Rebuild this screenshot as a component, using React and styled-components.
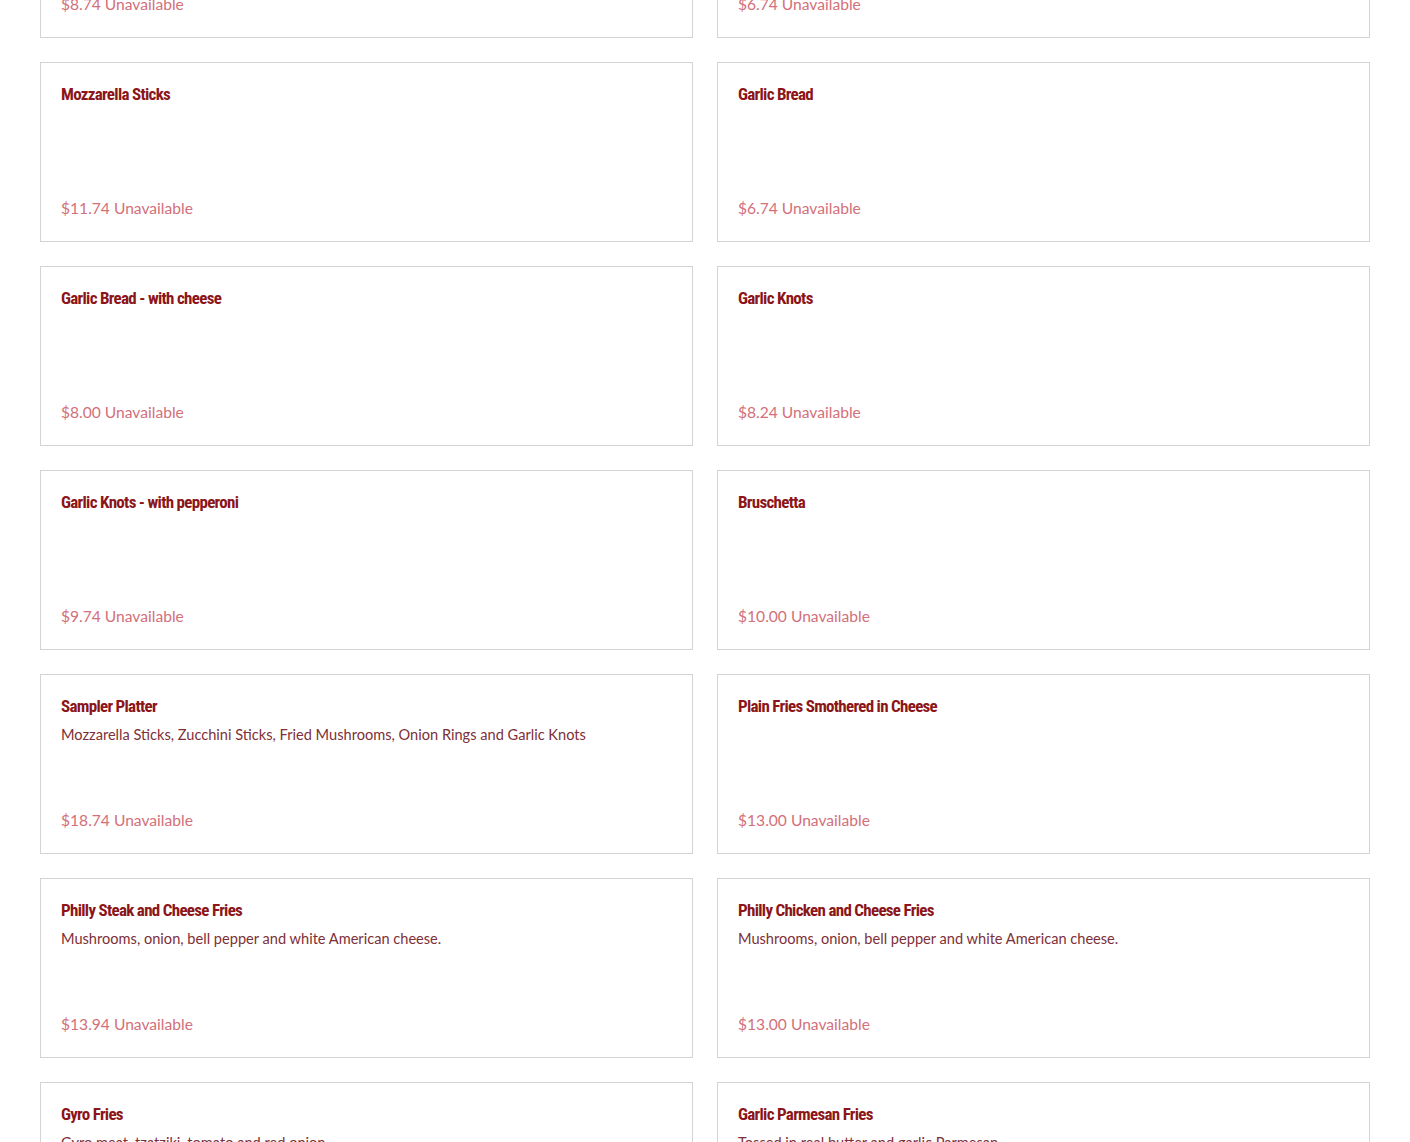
import styled, { createGlobalStyle } from "styled-components";

const GlobalStyle = createGlobalStyle`
  body {
    margin: 0;
    background: #fff;
    font-family: "Lato", "Open Sans", sans-serif;
  }
`;

const items = [
  { name: "Onion Rings", price: "$8.74" },
  { name: "French Fries", price: "$6.74" },
  { name: "Mozzarella Sticks", price: "$11.74" },
  { name: "Garlic Bread", price: "$6.74" },
  { name: "Garlic Bread - with cheese", price: "$8.00" },
  { name: "Garlic Knots", price: "$8.24" },
  { name: "Garlic Knots - with pepperoni", price: "$9.74" },
  { name: "Bruschetta", price: "$10.00" },
  {
    name: "Sampler Platter",
    description:
      "Mozzarella Sticks, Zucchini Sticks, Fried Mushrooms, Onion Rings and Garlic Knots",
    price: "$18.74",
  },
  { name: "Plain Fries Smothered in Cheese", price: "$13.00" },
  {
    name: "Philly Steak and Cheese Fries",
    description: "Mushrooms, onion, bell pepper and white American cheese.",
    price: "$13.94",
  },
  {
    name: "Philly Chicken and Cheese Fries",
    description: "Mushrooms, onion, bell pepper and white American cheese.",
    price: "$13.00",
  },
  {
    name: "Gyro Fries",
    description: "Gyro meat, tzatziki, tomato and red onion.",
    price: "$12.74",
  },
  {
    name: "Garlic Parmesan Fries",
    description: "Tossed in real butter and garlic Parmesan.",
    price: "$9.00",
  },
];

const Page = styled.main`
  padding: 0 40px 40px;
`;

const Grid = styled.div`
  display: grid;
  grid-template-columns: 1fr 1fr;
  gap: 24px;
  margin-top: -142px;
`;

const Card = styled.div`
  box-sizing: border-box;
  height: 180px;
  border: 1px solid #d4d4d4;
  padding: 20px;
  display: flex;
  flex-direction: column;
  background: #fff;
`;

const Title = styled.h3`
  margin: 0;
  font-family: "Roboto", sans-serif;
  font-stretch: 75%;
  font-weight: 700;
  font-size: 17px;
  line-height: 22px;
  letter-spacing: -0.7px;
  color: #8b1518;
`;

const Description = styled.p`
  margin: 8px 0 0;
  font-size: 14.6px;
  line-height: 20px;
  color: #7d3038;
`;

const PriceRow = styled.p`
  margin: auto 0 1px;
  font-size: 15.6px;
  line-height: 24px;
  color: #d3707a;
`;

export default function App() {
  return (
    <>
      <GlobalStyle />
      <Page>
        <Grid>
          {items.map((item) => (
            <Card key={item.name}>
              <Title>{item.name}</Title>
              {item.description && <Description>{item.description}</Description>}
              <PriceRow>{item.price} Unavailable</PriceRow>
            </Card>
          ))}
        </Grid>
      </Page>
    </>
  );
}
